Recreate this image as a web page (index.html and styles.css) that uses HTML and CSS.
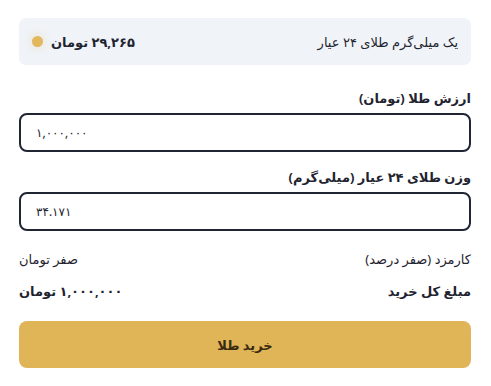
FILE: index.html
```html
<!DOCTYPE html>
<html lang="fa" dir="rtl">
<head>
    <meta charset="utf-8">
    <title>خرید طلا</title>
    <link rel="stylesheet" href="styles.css">
</head>
<body>
    <div class="buy">
        <div class="price-box">
            <span class="price-label">یک میلی‌گرم طلای ۲۴ عیار</span>
            <span class="price-value">۲۹,۲۶۵ تومان<span class="dot"></span></span>
        </div>
        <label class="field">
            <span class="field-label">ارزش طلا (تومان)</span>
            <input type="text" value="۱,۰۰۰,۰۰۰">
        </label>
        <label class="field">
            <span class="field-label">وزن طلای ۲۴ عیار (میلی‌گرم)</span>
            <input type="text" value="۳۴.۱۷۱">
        </label>
        <div class="row">
            <span>کارمزد (صفر درصد)</span>
            <span>صفر تومان</span>
        </div>
        <div class="row total">
            <span>مبلغ کل خرید</span>
            <span>۱,۰۰۰,۰۰۰ تومان</span>
        </div>
        <button class="buy-btn">خرید طلا</button>
    </div>
</body>
</html>
```

FILE: styles.css
```css
body{
    margin: 0;
    background: #fff;
    font-family: "Noto Sans", "DejaVu Sans", sans-serif;
    color: #1f2430;
}
.buy{
    padding: 18px 20px 0 19px;
}
.price-box{
    display: flex;
    justify-content: space-between;
    align-items: center;
    height: 47px;
    padding: 0 13px 0 13px;
    background: #f0f4f9;
    border-radius: 7px;
    font-size: 13px;
}
.price-value{
    display: flex;
    align-items: center;
    gap: 8px;
    font-weight: bold;
}
.dot{
    width: 11px;
    height: 11px;
    border-radius: 50%;
    background: #e2b85c;
    box-shadow: 0 0 8px 3px rgba(226, 184, 92, 0.18);
}
.field{
    display: block;
    margin-top: 24px;
}
.field + .field{
    margin-top: 16px;
}
.field-label{
    display: block;
    font-size: 13px;
    font-weight: bold;
    margin-bottom: 6px;
}
.field input{
    display: block;
    box-sizing: border-box;
    width: 100%;
    height: 39px;
    border: 2px solid #1f2533;
    border-radius: 8px;
    padding: 0 15px;
    direction: ltr;
    text-align: left;
    font-family: inherit;
    font-size: 12px;
    color: #1f2430;
    background: #fff;
    outline: none;
}
.row{
    display: flex;
    justify-content: space-between;
    font-size: 13px;
    margin-top: 19px;
}
.row.total{
    font-weight: bold;
    margin-top: 14px;
}
.buy-btn{
    display: block;
    width: 100%;
    height: 47px;
    margin-top: 21px;
    border: none;
    border-radius: 8px;
    background: #dfb558;
    color: #3a2a10;
    font-family: inherit;
    font-size: 13px;
    font-weight: bold;
}
```
